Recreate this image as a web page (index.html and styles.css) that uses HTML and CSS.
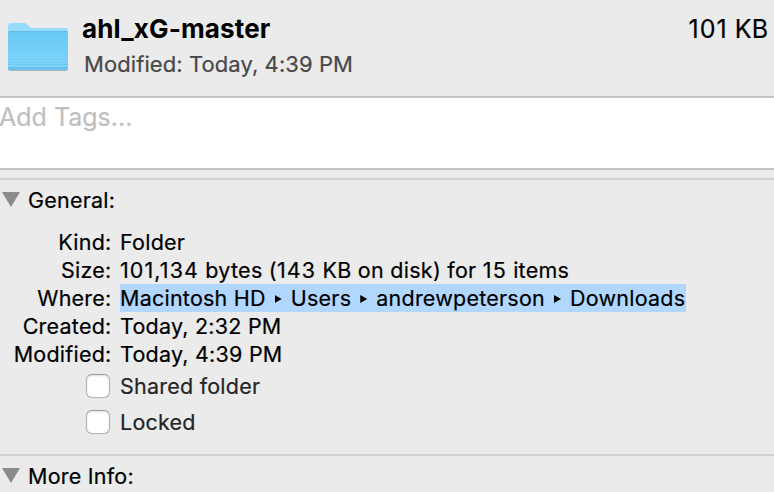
FILE: index.html
```
<!DOCTYPE html>
<html lang="en">
<head>
<meta charset="utf-8">
<title>ahl_xG-master Info</title>
<link rel="stylesheet" href="styles.css">
</head>
<body>
<main class="panel">
  <header class="summary">
    <svg class="folder" width="64" height="52" viewBox="0 0 64 52" aria-hidden="true">
      <defs>
        <linearGradient id="front" x1="0" y1="0" x2="0" y2="1">
          <stop offset="0" stop-color="#67c8f5"/>
          <stop offset="1" stop-color="#80d5fa"/>
        </linearGradient>
      </defs>
      <path d="M1 46V47.500Q1 50 3.500 50H58.500Q61 50 61 47.500V46Z" fill="#a9b4ba"/>
      <path d="M1 5Q1 2 4 2H17Q19 2 20.200 3.400L22.800 6Q24 7 26 7H58Q61 7 61 10V20H1Z" fill="#98dcfb"/>
      <path d="M1 12Q1 10 3 10H59Q61 10 61 12V46.500Q61 49 58.500 49H3.500Q1 49 1 46.500Z" fill="url(#front)"/>
      <path d="M1 41.500H61M1 43.500H61" stroke="#74c8ef" stroke-width="1"/>
      <path d="M1 46H61V46.500Q61 49 58.500 49H3.500Q1 49 1 46.500Z" fill="#6bc0ea"/>
      <path d="M2.500 10.500H59.500" stroke="#5fbde9"/>
    </svg>
    <div class="names">
      <h1 class="title">ahl_xG-master</h1>
      <p class="modified">Modified: Today, 4:39 PM</p>
    </div>
    <div class="total"><span class="num">101</span> KB</div>
  </header>
  <div class="tags">Add Tags...</div>
  <section class="general">
    <h2 class="heading"><svg class="disclosure" width="18" height="15" viewBox="0 0 18 15"><path d="M0 0H18L9 15Z"/></svg>General:</h2>
    <dl class="facts">
      <dt>Kind:</dt><dd>Folder</dd>
      <dt>Size:</dt><dd class="bytes"><span class="num">101,134</span> bytes (<span class="num">143</span> KB on disk) for <span class="num">15</span> items</dd>
      <dt>Where:</dt>
      <dd class="path"><span>Macintosh HD</span><i class="arrow"></i><span>Users</span><i class="arrow"></i><span>andrewpeterson</span><i class="arrow"></i><span>Downloads</span></dd>
      <dt>Created:</dt><dd>Today, 2:32 PM</dd>
      <dt>Modified:</dt><dd>Today, 4:39 PM</dd>
    </dl>
    <div class="options">
      <label class="option"><span class="box"></span>Shared folder</label>
      <label class="option"><span class="box"></span>Locked</label>
    </div>
  </section>
  <section class="more">
    <h2 class="heading"><svg class="disclosure" width="18" height="15" viewBox="0 0 18 15"><path d="M0 0H18L9 15Z"/></svg>More Info:</h2>
  </section>
</main>
</body>
</html>
```
FILE: styles.css
```
* { box-sizing: border-box; }
html, body { height: 100%; overflow: hidden; }
body {
  margin: 0;
  background: #ebebeb;
  color: #000;
  font: 21.5px/28px Inter, "Liberation Sans", sans-serif;
  letter-spacing: 0.23px;
  -webkit-text-stroke: 0.2px currentColor;
  white-space: nowrap;
}
h1, h2, p, dl, dd { margin: 0; font-size: inherit; font-weight: inherit; }
.panel { width: 774px; height: 492px; overflow: hidden; }
.summary { display: flex; height: 96px; padding: 0 6px 0 7px; }
.folder { margin-top: 21px; flex: none; }
.names { flex: 1; padding: 12px 0 0 11px; }
.title { font-size: 26px; line-height: 34px; font-weight: 700; letter-spacing: 0.15px; -webkit-text-stroke: 0; }
.modified { line-height: 28px; margin-top: 4px; padding-left: 2px; color: #484848; font-size: 22px; letter-spacing: 0.08px; }
.total { padding-top: 12px; font-size: 25px; line-height: 34px; letter-spacing: 0; }
.num { letter-spacing: 1.1px; }
.tags {
  height: 74px;
  border-top: 2px solid #c3c3c3;
  border-bottom: 2px solid #c3c3c3;
  background: #fff;
  color: #bfbfbf;
  font-size: 25px;
  line-height: 38px;
  letter-spacing: 0;
  text-indent: -1px;
}
.general { margin-top: 8px; height: 276px; border-top: 2px solid #d2d2d2; }
.more { border-top: 2px solid #d2d2d2; }
.heading { display: flex; align-items: center; height: 28px; margin-top: 6px; padding-left: 2px; gap: 8px; }
.disclosure { flex: none; fill: #8b8b8b; margin-top: -2px; }
.facts { display: grid; grid-template-columns: 111.500px max-content; column-gap: 8.500px; grid-auto-rows: 28px; margin-top: 14px; }
dt { text-align: right; }
.bytes { letter-spacing: 0.27px; }
.path { display: flex; align-items: center; width: 566px; background: #b2d7ff; }
.arrow { width: 7px; height: 8px; margin: 2px 9px 0; background: #000; clip-path: polygon(0 0, 100% 50%, 0 100%); flex: none; }
.options { padding: 4px 0 0 86px; color: #242424; }
.option { display: flex; align-items: center; height: 28px; margin-bottom: 8px; gap: 10px; }
.box {
  width: 24px; height: 24px;
  border: 1px solid #b4b4b4;
  border-top-color: #a0a0a0;
  border-radius: 6px;
  background: #fff;
  box-shadow: inset 0 1px 2px #ddd, 0 0 1px #bbb;
}
```
